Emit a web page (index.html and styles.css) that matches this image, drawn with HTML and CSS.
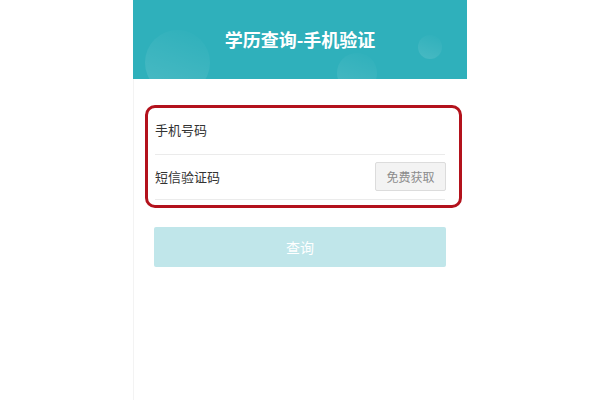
FILE: index.html
```html
<!DOCTYPE html>
<html lang="zh">
<head>
<meta charset="utf-8">
<title>学历查询-手机验证</title>
<link rel="stylesheet" href="styles.css">
</head>
<body>
<div class="page">
  <header class="header">
    <span class="bubble bubble-a"></span>
    <span class="bubble bubble-b"></span>
    <span class="bubble bubble-c"></span>
    <h1 class="title">学历查询-手机验证</h1>
  </header>
  <div class="form-box">
    <div class="row row-first">
      <span class="label">手机号码</span>
    </div>
    <div class="row row-second">
      <span class="label">短信验证码</span>
      <button class="code-btn" type="button">免费获取</button>
    </div>
  </div>
  <div class="actions">
    <button class="query-btn" type="button">查询</button>
  </div>
</div>
</body>
</html>
```

FILE: styles.css
```css
html, body {
  margin: 0;
  padding: 0;
  background: #ffffff;
}

body {
  font-family: "Noto Sans CJK SC", "Noto Sans", sans-serif;
  color: #333333;
}

.page {
  width: 334px;
  height: 400px;
  margin: 0 auto;
  background: #ffffff;
  border-left: 1px solid #f3f3f3;
  box-sizing: border-box;
}

.header {
  position: relative;
  height: 79px;
  margin-left: -1px;
  background: #2fb0bb;
  overflow: hidden;
  display: flex;
  align-items: center;
  justify-content: center;
}

.bubble {
  position: absolute;
  border-radius: 50%;
}

.bubble-a {
  left: 12px;
  top: 30px;
  width: 65px;
  height: 65px;
  background: linear-gradient(200deg, rgba(255,255,255,0.01) 10%, rgba(255,255,255,0.12) 90%);
}

.bubble-b {
  left: 204px;
  top: 53px;
  width: 40px;
  height: 40px;
  background: linear-gradient(200deg, rgba(255,255,255,0.01) 10%, rgba(255,255,255,0.11) 90%);
}

.bubble-c {
  left: 285px;
  top: 35px;
  width: 24px;
  height: 24px;
  background: linear-gradient(200deg, rgba(255,255,255,0.01) 10%, rgba(255,255,255,0.11) 90%);
}

.title {
  position: relative;
  margin: 0;
  padding-bottom: 1px;
  font-size: 18px;
  font-weight: bold;
  color: #ffffff;
  letter-spacing: 0;
}

.form-box {
  margin: 26px 5px 0 11px;
  border: 3px solid #b3121c;
  border-radius: 10px;
  padding: 0 14px 5px 7px;
}

.row {
  display: flex;
  align-items: center;
  justify-content: space-between;
  border-bottom: 1px solid #ebebeb;
  box-sizing: border-box;
}

.row-first {
  height: 47px;
  padding-bottom: 3px;
}

.row-second {
  height: 45px;
  padding-bottom: 1px;
}

.label {
  font-size: 13px;
  color: #333333;
}

.code-btn {
  width: 71px;
  height: 29px;
  margin-right: -1px;
  padding: 0;
  border: 1px solid #dcdcdc;
  border-radius: 2px;
  background: #f3f3f3;
  color: #8c8c8c;
  font-family: "Noto Sans CJK SC", "Noto Sans", sans-serif;
  font-size: 12px;
}

.actions {
  padding: 19px 20px 0 20px;
}

.query-btn {
  display: block;
  width: 292px;
  height: 40px;
  padding: 0;
  border: none;
  border-radius: 2px;
  background: #c0e6ea;
  color: #ffffff;
  font-family: "Noto Sans CJK SC", "Noto Sans", sans-serif;
  font-size: 14px;
}
```
